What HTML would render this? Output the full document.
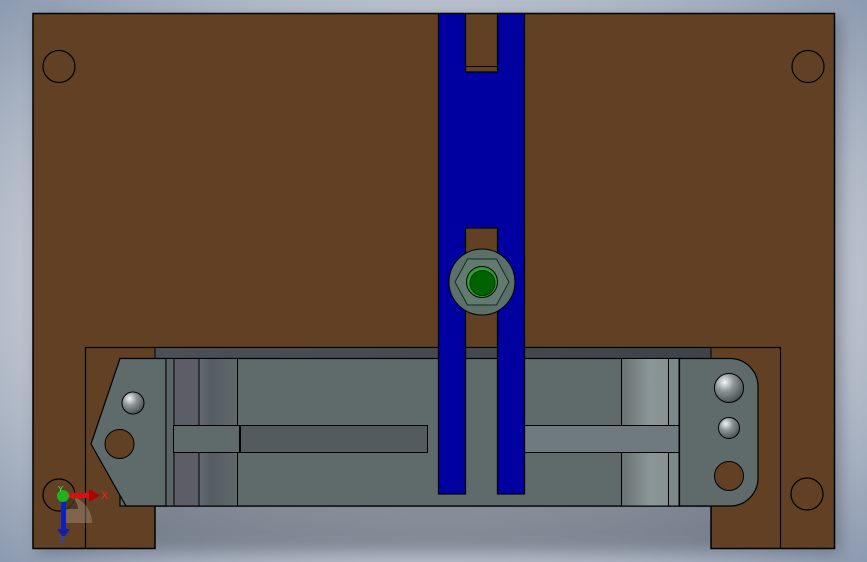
<!DOCTYPE html>
<html><head><style>html,body{margin:0;padding:0;width:867px;height:562px;overflow:hidden;background:#a3aebd}</style></head>
<body>
<svg width="867" height="562" viewBox="0 0 867 562" xmlns="http://www.w3.org/2000/svg" style="display:block">
<defs>
<radialGradient id="bg" cx="50%" cy="50%" r="70%">
<stop offset="0" stop-color="#dde0e6"/><stop offset="0.6" stop-color="#c6ccd5"/><stop offset="1" stop-color="#8d9bb0"/>
</radialGradient>
<linearGradient id="cylL" x1="0" x2="1" y1="0" y2="0">
<stop offset="0" stop-color="#646a70"/><stop offset="0.3" stop-color="#565c62"/><stop offset="1" stop-color="#5f6a6b"/>
</linearGradient>
<linearGradient id="cylR" x1="0" x2="1">
<stop offset="0" stop-color="#67716f"/><stop offset="0.6" stop-color="#8a9698"/><stop offset="1" stop-color="#86928f"/>
</linearGradient>
<linearGradient id="strip" x1="0" x2="1">
<stop offset="0" stop-color="#4a5056"/><stop offset="0.5" stop-color="#444a50"/><stop offset="1" stop-color="#3e4349"/>
</linearGradient>
<radialGradient id="ball" cx="0.35" cy="0.3" r="0.8">
<stop offset="0" stop-color="#f4f6f6"/><stop offset="0.4" stop-color="#8c9496"/><stop offset="1" stop-color="#3e4648"/>
</radialGradient>
<filter id="sh" x="-10%" y="-10%" width="120%" height="120%"><feGaussianBlur stdDeviation="8"/></filter>
</defs>
<rect width="867" height="562" fill="url(#bg)"/>
<!-- shadow -->
<path d="M38 18H840V553H38Z" fill="#3a4250" opacity="0.45" filter="url(#sh)"/>
<!-- board -->
<path d="M33 13.5H834.5V548.5H711V506H155V548.5H33Z" fill="#614023" stroke="#000" stroke-width="1.5"/>
<path d="M85.5 548V347.5H780.5V548" fill="none" stroke="#000" stroke-width="1.2"/>
<rect x="155" y="347.5" width="556" height="11" fill="url(#strip)" stroke="#000" stroke-width="1"/>
<circle cx="59" cy="66.5" r="16" fill="none" stroke="#000" stroke-width="1.2"/>
<circle cx="808" cy="66.5" r="16" fill="none" stroke="#000" stroke-width="1.2"/>
<circle cx="59" cy="495" r="16" fill="none" stroke="#000" stroke-width="1.2"/>
<circle cx="807" cy="494" r="16" fill="none" stroke="#000" stroke-width="1.2"/>
<!-- main plate -->
<rect x="120" y="358.5" width="560" height="147.5" fill="#5f6b6b" stroke="#000" stroke-width="1.2"/>
<path d="M120 358.5H166V506H126L91 444Z" fill="#5f6b6b" stroke="#000" stroke-width="1.2"/>
<rect x="166" y="358.5" width="8" height="147.5" fill="#5b6567" stroke="#000" stroke-width="1"/>
<rect x="174" y="358.5" width="25" height="147.5" fill="#5d5d68" stroke="#000" stroke-width="1"/>
<rect x="199" y="358.5" width="38.5" height="147.5" fill="url(#cylL)" stroke="#000" stroke-width="1"/>
<rect x="173.5" y="425.5" width="66" height="27" fill="#5f6b6b" stroke="#000" stroke-width="1"/>
<rect x="240.5" y="425.5" width="187" height="27" fill="#525c5e" stroke="#000" stroke-width="1"/>
<circle cx="133" cy="403" r="11" fill="url(#ball)" stroke="#000" stroke-width="1"/>
<circle cx="119.5" cy="444" r="14.5" fill="#614023" stroke="#000" stroke-width="1"/>
<!-- right parts -->
<rect x="524" y="425.5" width="155" height="27" fill="#6e7a7e" stroke="#000" stroke-width="1"/>
<rect x="621.5" y="358.5" width="47" height="67" fill="url(#cylR)" stroke="#000" stroke-width="1"/>
<rect x="621.5" y="452.5" width="47" height="53.5" fill="url(#cylR)" stroke="#000" stroke-width="1"/>
<rect x="668.5" y="358.5" width="10.5" height="67" fill="#7c888a" stroke="#000" stroke-width="1"/>
<rect x="668.5" y="452.5" width="10.5" height="53.5" fill="#7c888a" stroke="#000" stroke-width="1"/>
<path d="M679.5 358.5H730A28 28 0 0 1 758 386.5V478A28 28 0 0 1 730 506H679.5Z" fill="#5f6b6b" stroke="#000" stroke-width="1.2"/>
<circle cx="729" cy="388" r="14.5" fill="url(#ball)" stroke="#000" stroke-width="1"/>
<circle cx="729" cy="428" r="10.5" fill="url(#ball)" stroke="#000" stroke-width="1"/>
<circle cx="729" cy="476" r="14.5" fill="#614023" stroke="#000" stroke-width="1"/>
<!-- blue fork -->
<path d="M438.5 13.5H465.5V72H497.5V13.5H524.5V494H497.5V228H465.5V494H438.5Z" fill="#0000a0" stroke="#000" stroke-width="1.3"/>
<line x1="465.5" y1="66.5" x2="497.5" y2="66.5" stroke="#000" stroke-width="1"/>
<!-- nut -->
<circle cx="482" cy="282" r="33" fill="#5b7068" stroke="#000" stroke-width="1"/>
<path d="M455 282L467.5 259H496.5L509 282L496.5 305H467.5Z" fill="#627a70" stroke="#1a2a20" stroke-width="1"/>
<circle cx="482" cy="282" r="15.5" fill="#2aa32a" stroke="#000" stroke-width="1"/>
<circle cx="482.5" cy="283" r="12.5" fill="#006200" stroke="#003000" stroke-width="1"/>
<!-- triad -->
<path d="M64 495 A28 28 0 0 1 92 523 L64 523Z" fill="#b09a88" opacity="0.4"/>
<path d="M64 495 A14 14 0 0 1 78 509 L64 509Z" fill="#2a1a0a" opacity="0.6"/>
<rect x="64" y="493" width="26" height="5" fill="#d81010"/>
<path d="M89 489L100 495.5L89 502Z" fill="#b00000"/>
<text x="101" y="499" font-family="Liberation Sans,sans-serif" font-size="11" fill="#ff2020">X</text>
<rect x="61" y="496" width="5" height="34" fill="#1020c0"/>
<path d="M57 529L63.5 538L70 529Z" fill="#1020a0"/>
<text x="59" y="543" font-family="Liberation Sans,sans-serif" font-size="10" fill="#2040ff">Z</text>
<circle cx="63" cy="496" r="6" fill="#20b020"/>
<text x="58" y="492" font-family="Liberation Sans,sans-serif" font-size="8" fill="#40ff40">Y</text>
</svg>
</body></html>
